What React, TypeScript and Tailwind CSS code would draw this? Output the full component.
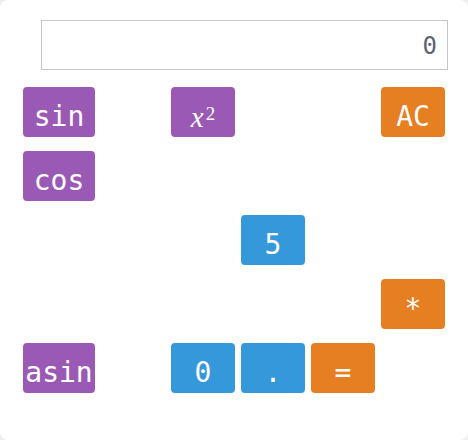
import React from "react";

type Key = { label: React.ReactNode; col: string; row: string; color: string };

const purple = "bg-[#9b59b6]";
const blue = "bg-[#3498db]";
const orange = "bg-[#e67e22]";

const square = (
  <span className="font-['Liberation_Serif',serif] leading-none">
    <span className="italic text-[29px]">x</span>
    <sup className="text-[19px] relative -top-[7px] ml-[2px]">2</sup>
  </span>
);

const keys: Key[] = [
  { label: "sin", col: "col-start-1", row: "row-start-1", color: purple },
  { label: square, col: "col-start-3", row: "row-start-1", color: purple },
  { label: "AC", col: "col-start-6", row: "row-start-1", color: orange },
  { label: "cos", col: "col-start-1", row: "row-start-2", color: purple },
  { label: "5", col: "col-start-4", row: "row-start-3", color: blue },
  { label: "*", col: "col-start-6", row: "row-start-4", color: orange },
  { label: "asin", col: "col-start-1", row: "row-start-5", color: purple },
  { label: "0", col: "col-start-3", row: "row-start-5", color: blue },
  { label: ".", col: "col-start-4", row: "row-start-5", color: blue },
  { label: "=", col: "col-start-5", row: "row-start-5", color: orange },
];

export default function App() {
  return (
    <div className="w-[468px] h-[440px] bg-[#eeeeee]">
      <div className="w-full h-full bg-white rounded-lg flex flex-col pt-[20px] font-['DejaVu_Sans_Mono',monospace]">
        <div className="ml-[41px] w-[407px] h-[50px] border border-[#c3c7cb] flex items-center justify-end pr-[10px] pt-[2px] text-[24px] text-[#5d6470]">
          0
        </div>
        <div className="mt-[17px] ml-[23px] grid grid-cols-[72px_repeat(5,64px)] grid-rows-[repeat(5,50px)] gap-x-[6px] gap-y-[14px]">
          {keys.map((k, i) => (
            <button
              key={i}
              className={`${k.col} ${k.row} ${k.color} rounded text-white text-[28px] flex items-center justify-center pt-[10px]`}
            >
              {k.label}
            </button>
          ))}
        </div>
      </div>
    </div>
  );
}
